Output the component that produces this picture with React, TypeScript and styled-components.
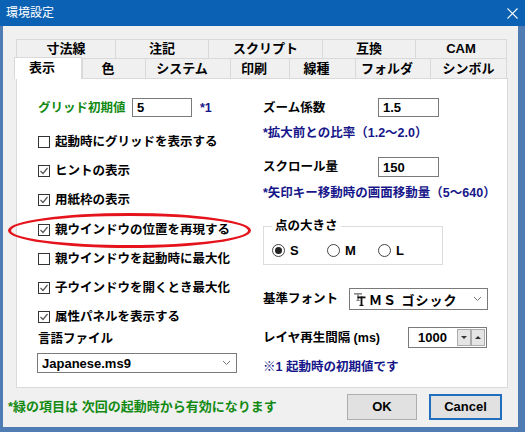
import React from "react";
import styled, { createGlobalStyle } from "styled-components";

const Global = createGlobalStyle`
  html, body { margin: 0; padding: 0; background: #fff; }
  * { box-sizing: border-box; }
  body { font-family: "Liberation Sans", "Noto Sans CJK JP", sans-serif; }
`;

const FONT = `"Liberation Sans", "Noto Sans CJK JP", sans-serif`;

const Window = styled.div`
  position: relative;
  width: 525px;
  height: 432px;
  background: #4f7db3;
  display: flex;
  flex-direction: column;
  overflow: hidden;
`;

const TitleBar = styled.div`
  height: 26px;
  flex: none;
  background: #0b62b4;
  display: flex;
  align-items: center;
  justify-content: space-between;
  padding: 0 7px 0 6px;
  color: #fff;
`;

const Title = styled.span`
  font-family: ${FONT};
  font-size: 12px;
  font-weight: 400;
  line-height: 14px;
`;

const Body = styled.div`
  flex: 1;
  margin: 0 7px 5px 3px;
  background: #f0f0f0;
  display: flex;
  flex-direction: column;
`;

const TabsBlock = styled.div`
  margin: 13px 10px 0 13px;
  display: flex;
  flex-direction: column;
`;

const TabRow = styled.div<{ $h: number }>`
  display: flex;
  height: ${(p) => p.$h}px;
  align-items: flex-end;
`;

const Tab = styled.div<{ $w: number; $pr?: number; $last?: boolean }>`
  width: ${(p) => p.$w}px;
  height: 100%;
  flex: none;
  border-top: 1px solid #d9d9d9;
  border-left: 1px solid #d9d9d9;
  border-right: ${(p) => (p.$last ? "1px solid #d9d9d9" : "none")};
  background: #f0f0f0;
  display: flex;
  align-items: center;
  justify-content: center;
  padding-right: ${(p) => p.$pr ?? 0}px;
  font-family: ${FONT};
  font-size: 13px;
  font-weight: 700;
  color: #000;
  line-height: 14px;
`;

const ActiveTab = styled(Tab)`
  margin-left: -2px;
  height: 22px;
  margin-bottom: -1px;
  background: #fff;
  border-right: 1px solid #d9d9d9;
  position: relative;
  z-index: 1;
  padding-bottom: 2px;
`;

const Panel = styled.div`
  width: 492px;
  height: 310px;
  background: #fff;
  border: 1px solid #d9d9d9;
  padding: 19px 0 0 21px;
  display: grid;
  grid-template-columns: 225px 1fr;
  align-items: start;
`;

const Col = styled.div`
  display: flex;
  flex-direction: column;
`;

const Text = styled.span<{ $c?: string; $w?: number }>`
  font-family: ${FONT};
  font-size: 12.5px;
  font-weight: 700;
  line-height: 14px;
  color: ${(p) => p.$c ?? "#000"};
  white-space: nowrap;
  ${(p) => (p.$w ? `width: ${p.$w}px; flex: none;` : "")}
`;

const Note = styled(Text)<{ $mt: number }>`
  display: block;
  margin-top: ${(p) => p.$mt}px;
  color: #16168a;
`;

const FieldRow = styled.div<{ $h: number; $mt?: number }>`
  display: flex;
  align-items: center;
  height: ${(p) => p.$h}px;
  margin-top: ${(p) => p.$mt ?? 0}px;
`;

const TextBox = styled.div<{ $w: number; $h: number }>`
  width: ${(p) => p.$w}px;
  height: ${(p) => p.$h}px;
  flex: none;
  border: 1px solid #7a7a7a;
  background: #fff;
  display: flex;
  align-items: center;
  padding-left: 4px;
  font-family: ${FONT};
  font-size: 13px;
  font-weight: 700;
  color: #000;
`;

const Star = styled(Text)`
  margin-left: 8px;
  color: #16168a;
`;

const CheckList = styled.div`
  margin-top: 10px;
  display: flex;
  flex-direction: column;
`;

const CheckRow = styled.div`
  height: 29.3px;
  display: flex;
  align-items: center;
  gap: 5px;
`;

const Box = styled.span`
  width: 12px;
  height: 12px;
  flex: none;
  border: 1px solid #333;
  background: #fff;
  display: flex;
  align-items: center;
  justify-content: center;
`;

const Select = styled.div<{ $w: number; $h: number; $ml?: number }>`
  width: ${(p) => p.$w}px;
  height: ${(p) => p.$h}px;
  margin-left: ${(p) => p.$ml ?? 0}px;
  flex: none;
  border: 1px solid #7a7a7a;
  background: #fff;
  display: flex;
  align-items: center;
  justify-content: space-between;
  padding: 0 5px 0 4px;
  font-family: ${FONT};
  font-size: 13px;
  font-weight: 700;
  color: #000;
`;

const Group = styled.fieldset`
  margin: 19px 0 0 0;
  width: 180px;
  padding: 0 0 4px 8px;
  border: 1px solid #dcdcdc;
  min-width: 0;
`;

const Legend = styled.legend`
  margin-left: 0px;
  padding: 0 3px;
  font-family: ${FONT};
  font-size: 12.5px;
  font-weight: 700;
  line-height: 14px;
  color: #000;
`;

const RadioRow = styled.div`
  margin-top: 7px;
  height: 20px;
  display: flex;
  align-items: center;
`;

const RadioItem = styled.div<{ $w: number }>`
  width: ${(p) => p.$w}px;
  display: flex;
  align-items: center;
  gap: 5px;
  font-family: ${FONT};
  font-size: 13px;
  font-weight: 700;
`;

const Radio = styled.span<{ $on?: boolean }>`
  width: 13px;
  height: 13px;
  border-radius: 50%;
  border: 1px solid #444;
  background: #fff;
  display: flex;
  align-items: center;
  justify-content: center;
  &::after {
    content: "";
    width: 7px;
    height: 7px;
    border-radius: 50%;
    background: ${(p) => (p.$on ? "#222" : "transparent")};
  }
`;

const FontValue = styled.span`
  display: flex;
  align-items: center;
  gap: 3px;
  font-weight: 700;
  letter-spacing: 1px;
  font-family: ${FONT};
`;

const Spin = styled.div`
  width: 79px;
  height: 21px;
  border: 1px solid #7a7a7a;
  background: #fff;
  display: flex;
  align-items: center;
  padding: 0 1px 0 9px;
  font-family: ${FONT};
  font-size: 13px;
  font-weight: 700;
`;

const SpinVal = styled.span`
  flex: 1;
`;

const SpinBtn = styled.span<{ $up?: boolean }>`
  width: 14px;
  height: 17px;
  border: 1px solid #acacac;
  background: #e5e5e5;
  display: flex;
  align-items: center;
  justify-content: center;
  &::after {
    content: "";
    border-left: 3px solid transparent;
    border-right: 3px solid transparent;
    ${(p) =>
      p.$up ? "border-bottom: 3px solid #333;" : "border-top: 3px solid #333;"}
  }
`;

const Footer = styled.div`
  flex: 1;
  display: flex;
  align-items: center;
  padding: 0 16px 2px 5px;
`;

const FootNote = styled(Text)`
  flex: 1;
  font-size: 13px;
  color: #138a13;
`;

const Button = styled.div<{ $w: number; $primary?: boolean }>`
  width: ${(p) => p.$w}px;
  height: 26px;
  margin-left: 12px;
  background: #e1e1e1;
  border: ${(p) => (p.$primary ? "2px solid #1f6fbd" : "1px solid #adadad")};
  display: flex;
  align-items: center;
  justify-content: center;
  font-family: ${FONT};
  font-size: 13px;
  font-weight: 700;
  color: #000;
`;

const Ring = styled.div`
  position: absolute;
  left: 8px;
  top: 213px;
  width: 243px;
  height: 35px;
  border: 3px solid #e5141c;
  border-radius: 50%;
  pointer-events: none;
`;

const Check = () => (
  <svg width="10" height="10" viewBox="0 0 10 10">
    <polyline points="1.5,5 4,7.5 8.5,2" fill="none" stroke="#555" strokeWidth="1.2" />
  </svg>
);

const Chevron = () => (
  <svg width="9" height="6" viewBox="0 0 9 6">
    <polyline points="1,1 4.5,4.5 8,1" fill="none" stroke="#777" strokeWidth="1" />
  </svg>
);

const CloseX = () => (
  <svg width="11" height="11" viewBox="0 0 11 11">
    <path d="M0.5 0.5 L10.5 10.5 M10.5 0.5 L0.5 10.5" stroke="#fff" strokeWidth="1.1" />
  </svg>
);

/* TrueType logo: two overlapping T shapes */
const TrueTypeIcon = () => (
  <svg width="12" height="13" viewBox="0 0 12 13">
    <g fill="#8a8a8a">
      <rect x="0" y="0" width="8" height="1.6" />
      <rect x="3.2" y="0" width="1.6" height="8" />
      <rect x="2.2" y="7" width="3.6" height="1" />
    </g>
    <g fill="#111">
      <rect x="3.5" y="3.5" width="8" height="1.8" />
      <rect x="6.6" y="3.5" width="1.8" height="9" />
      <rect x="5.5" y="11.8" width="4" height="1.2" />
    </g>
  </svg>
);

const checks: [string, boolean][] = [
  ["起動時にグリッドを表示する", false],
  ["ヒントの表示", true],
  ["用紙枠の表示", true],
  ["親ウインドウの位置を再現する", true],
  ["親ウインドウを起動時に最大化", false],
  ["子ウインドウを開くとき最大化", true],
  ["属性パネルを表示する", true],
];

const row1: [string, number][] = [
  ["寸法線", 99],
  ["注記", 93],
  ["スクリプト", 114],
  ["互換", 93],
  ["CAM", 92],
];

const row2: [string, number][] = [
  ["色", 63],
  ["システム", 85],
  ["印刷", 59],
  ["線種", 66],
  ["フォルダ", 75],
];

export default function App() {
  return (
    <>
      <Global />
      <Window>
        <TitleBar>
          <Title>環境設定</Title>
          <CloseX />
        </TitleBar>
        <Body>
          <TabsBlock>
            <TabRow $h={19}>
              {row1.map(([t, w], i) => (
                <Tab key={t} $w={w} $last={i === row1.length - 1}>
                  {t}
                </Tab>
              ))}
            </TabRow>
            <TabRow $h={20}>
              <ActiveTab $w={68} $pr={12}>
                表示
              </ActiveTab>
              {row2.map(([t, w]) => (
                <Tab key={t} $w={w} $pr={12}>
                  {t}
                </Tab>
              ))}
              <Tab $w={77} $last>
                シンボル
              </Tab>
            </TabRow>
            <Panel>
              <Col>
                <FieldRow $h={19}>
                  <Text $c="#138a13" $w={94}>
                    グリッド初期値
                  </Text>
                  <TextBox $w={60} $h={19}>
                    5
                  </TextBox>
                  <Star>*1</Star>
                </FieldRow>
                <CheckList>
                  {checks.map(([t, on]) => (
                    <CheckRow key={t}>
                      <Box>{on && <Check />}</Box>
                      <Text>{t}</Text>
                    </CheckRow>
                  ))}
                </CheckList>
                <Text>言語ファイル</Text>
                <FieldRow $h={20} $mt={7}>
                  <Select $w={200} $h={20} $ml={-1}>
                    <span>Japanese.ms9</span>
                    <Chevron />
                  </Select>
                </FieldRow>
              </Col>
              <Col>
                <FieldRow $h={19}>
                  <Text $w={115}>ズーム係数</Text>
                  <TextBox $w={61} $h={19}>
                    1.5
                  </TextBox>
                </FieldRow>
                <Note $mt={9}>*拡大前との比率（1.2～2.0）</Note>
                <FieldRow $h={20} $mt={17}>
                  <Text $w={115}>スクロール量</Text>
                  <TextBox $w={61} $h={20}>
                    150
                  </TextBox>
                </FieldRow>
                <Note $mt={9}>*矢印キー移動時の画面移動量（5～640）</Note>
                <Group>
                  <Legend>点の大きさ</Legend>
                  <RadioRow>
                    <RadioItem $w={55}>
                      <Radio $on />S
                    </RadioItem>
                    <RadioItem $w={51}>
                      <Radio />M
                    </RadioItem>
                    <RadioItem $w={40}>
                      <Radio />L
                    </RadioItem>
                  </RadioRow>
                </Group>
                <FieldRow $h={22} $mt={23}>
                  <Text $w={86}>基準フォント</Text>
                  <Select $w={139} $h={22}>
                    <FontValue>
                      <TrueTypeIcon />
                      ＭＳ ゴシック
                    </FontValue>
                    <Chevron />
                  </Select>
                </FieldRow>
                <FieldRow $h={21} $mt={17}>
                  <Text $w={145}>レイヤ再生間隔 (ms)</Text>
                  <Spin>
                    <SpinVal>1000</SpinVal>
                    <SpinBtn />
                    <SpinBtn $up />
                  </Spin>
                </FieldRow>
                <Note $mt={12}>※1 起動時の初期値です</Note>
              </Col>
            </Panel>
          </TabsBlock>
          <Footer>
            <FootNote>*緑の項目は 次回の起動時から有効になります</FootNote>
            <Button $w={70}>OK</Button>
            <Button $w={73} $primary>
              Cancel
            </Button>
          </Footer>
        </Body>
        <Ring />
      </Window>
    </>
  );
}
